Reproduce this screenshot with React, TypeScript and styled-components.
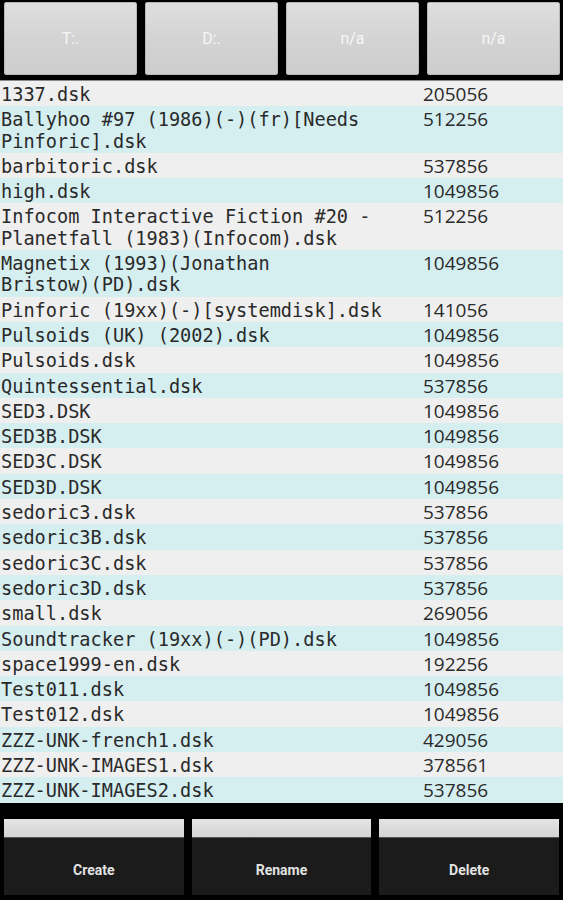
import React from 'react';
import styled, { createGlobalStyle } from 'styled-components';

const GlobalStyle = createGlobalStyle`
  html, body {
    margin: 0;
    padding: 0;
    background: #000;
  }
`;

type DiskFile = { name: string; size: string };

const files: DiskFile[] = [
  { name: '1337.dsk', size: '205056' },
  { name: 'Ballyhoo #97 (1986)(-)(fr)[Needs Pinforic].dsk', size: '512256' },
  { name: 'barbitoric.dsk', size: '537856' },
  { name: 'high.dsk', size: '1049856' },
  { name: 'Infocom Interactive Fiction #20 - Planetfall (1983)(Infocom).dsk', size: '512256' },
  { name: 'Magnetix (1993)(Jonathan Bristow)(PD).dsk', size: '1049856' },
  { name: 'Pinforic (19xx)(-)[systemdisk].dsk', size: '141056' },
  { name: 'Pulsoids (UK) (2002).dsk', size: '1049856' },
  { name: 'Pulsoids.dsk', size: '1049856' },
  { name: 'Quintessential.dsk', size: '537856' },
  { name: 'SED3.DSK', size: '1049856' },
  { name: 'SED3B.DSK', size: '1049856' },
  { name: 'SED3C.DSK', size: '1049856' },
  { name: 'SED3D.DSK', size: '1049856' },
  { name: 'sedoric3.dsk', size: '537856' },
  { name: 'sedoric3B.dsk', size: '537856' },
  { name: 'sedoric3C.dsk', size: '537856' },
  { name: 'sedoric3D.dsk', size: '537856' },
  { name: 'small.dsk', size: '269056' },
  { name: 'Soundtracker (19xx)(-)(PD).dsk', size: '1049856' },
  { name: 'space1999-en.dsk', size: '192256' },
  { name: 'Test011.dsk', size: '1049856' },
  { name: 'Test012.dsk', size: '1049856' },
  { name: 'ZZZ-UNK-french1.dsk', size: '429056' },
  { name: 'ZZZ-UNK-IMAGES1.dsk', size: '378561' },
  { name: 'ZZZ-UNK-IMAGES2.dsk', size: '537856' },
];

const drives = ['T:.', 'D:.', 'n/a', 'n/a'];
const actions = ['Create', 'Rename', 'Delete'];

// the device only wraps at spaces, so glue ")(" and similar together
const glue = (s: string) => s.replace(/([)\]])([(\[])/g, '$1\u2060$2');

const App = () => {
  return (
    <Screen>
      <GlobalStyle />
      <DriveBar>
        {drives.map((d, i) => (
          <DriveButton key={i}>{d}</DriveButton>
        ))}
      </DriveBar>
      <FileList>
        {files.map((f, i) => (
          <FileRow key={f.name} $alt={i % 2 === 1}>
            <FileName>{glue(f.name)}</FileName>
            <FileSize>{f.size}</FileSize>
          </FileRow>
        ))}
      </FileList>
      <ActionBar>
        {actions.map((a) => (
          <ActionButton key={a}>
            <ActionCap />
            <ActionFace>{a}</ActionFace>
          </ActionButton>
        ))}
      </ActionBar>
    </Screen>
  );
};

const Screen = styled.div`
  width: 563px;
  height: 900px;
  background: #000;
  display: flex;
  flex-direction: column;
  overflow: hidden;
`;

const DriveBar = styled.div`
  display: flex;
  gap: 8px;
  padding: 2px 3px 0 4px;
  height: 73px;
  flex-shrink: 0;
`;

const DriveButton = styled.div`
  flex: 1;
  display: flex;
  align-items: center;
  justify-content: center;
  background: linear-gradient(#dedede, #d2d2d2 60%, #cdcdcd);
  border: 1px solid #b8b8b8;
  border-radius: 2px;
  color: #f6f6f6;
  font-family: Roboto, 'Liberation Sans', sans-serif;
  font-size: 16px;
`;

const FileList = styled.div`
  margin-top: 5px;
  border-top: 1px solid #8a8a8a;
  display: flex;
  flex-direction: column;
  flex-shrink: 0;
`;

const FileRow = styled.div<{ $alt: boolean }>`
  display: grid;
  grid-template-columns: 421px 1fr;
  padding: 3px 0 1px 1px;
  background: ${(p) => (p.$alt ? '#d5eef0' : '#efefef')};
  color: #2a2a2a;
`;

const FileName = styled.div`
  font-family: 'DejaVu Sans Mono', 'Liberation Mono', monospace;
  font-size: 18.6px;
  line-height: 21.3px;
`;

const FileSize = styled.div`
  font-family: 'Open Sans', 'Noto Sans', sans-serif;
  font-size: 19px;
  line-height: 21.3px;
  padding-left: 1px;
`;

const ActionBar = styled.div`
  display: flex;
  gap: 8px;
  padding: 16px 4px 0 4px;
  flex-shrink: 0;
`;

const ActionButton = styled.div`
  flex: 1;
  display: flex;
  flex-direction: column;
`;

const ActionCap = styled.div`
  height: 18px;
  background: linear-gradient(#e4e4e4, #d4d4d4);
  border-bottom: 1px solid #555;
`;

const ActionFace = styled.div`
  height: 57px;
  padding-top: 8px;
  box-sizing: border-box;
  background: #1b1b1b;
  display: flex;
  align-items: center;
  justify-content: center;
  color: #e2e2e2;
  font-family: Roboto, 'Liberation Sans', sans-serif;
  font-weight: bold;
  font-size: 14px;
`;

export default App;
